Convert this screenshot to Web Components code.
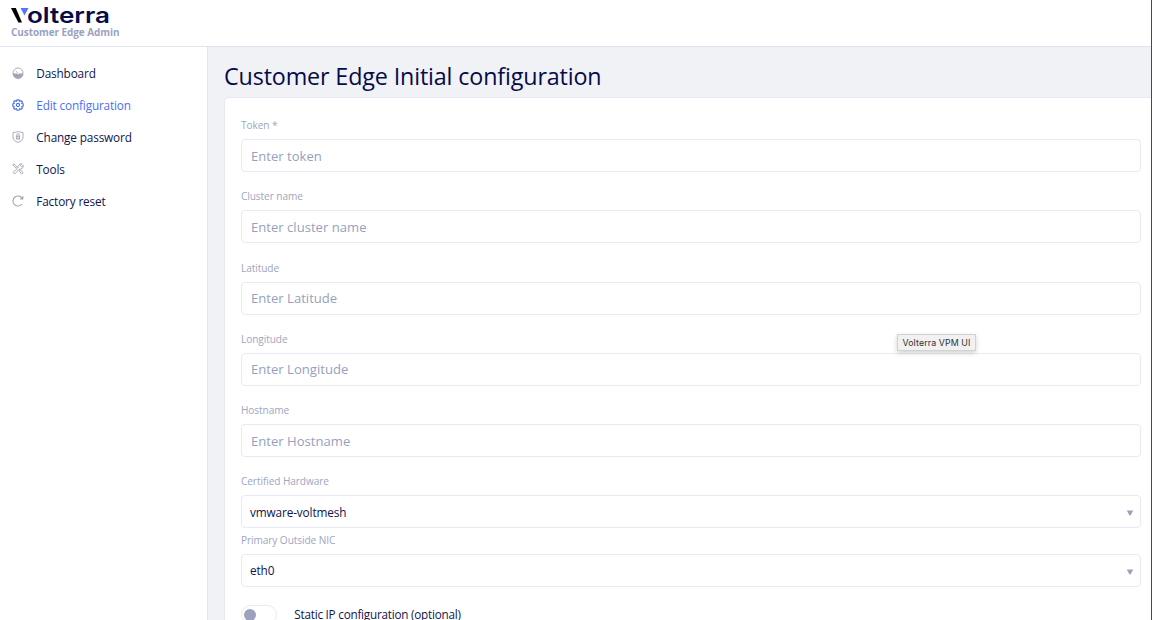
<!DOCTYPE html>
<html lang="en"><head><meta charset="utf-8"><title>Volterra VPM UI</title>
<style>html,body{margin:0;height:100%;overflow:hidden;background:#fff}body{font-family:"Open Sans","Noto Sans",sans-serif;color:#0f1247}</style></head><body>
<vp-app>
<vp-brand slot="header">Customer Edge Admin</vp-brand>
<vp-nav-item slot="nav" icon="dash">Dashboard</vp-nav-item>
<vp-nav-item slot="nav" icon="gear" active>Edit configuration</vp-nav-item>
<vp-nav-item slot="nav" icon="shield">Change password</vp-nav-item>
<vp-nav-item slot="nav" icon="tools">Tools</vp-nav-item>
<vp-nav-item slot="nav" icon="reset">Factory reset</vp-nav-item>
<span slot="title">Customer Edge Initial configuration</span>
<vp-field label="Token *">Enter token</vp-field>
<vp-field label="Cluster name">Enter cluster name</vp-field>
<vp-field label="Latitude">Enter Latitude</vp-field>
<vp-field label="Longitude">Enter Longitude</vp-field>
<vp-field label="Hostname">Enter Hostname</vp-field>
<vp-field label="Certified Hardware" select>vmware-voltmesh</vp-field>
<vp-field label="Primary Outside NIC" select>eth0</vp-field>
<vp-toggle>Static IP configuration (optional)</vp-toggle>
<vp-tip slot="tip">Volterra VPM UI</vp-tip>
</vp-app>
<script>
const define=(name,html,setup)=>customElements.define(name,class extends HTMLElement{
  constructor(){super();this.attachShadow({mode:'open'}).innerHTML=html}
  connectedCallback(){if(setup)setup(this,this.shadowRoot)}
});
define('vp-app',`<style>
:host{display:grid;grid-template:46.5px 1fr/208px 1fr;height:620px;width:1151px;border-right:1px solid #41486a;overflow:hidden;position:relative}
header{grid-column:1/3;border-bottom:1px solid #dfe3ee;box-sizing:border-box}
nav{border-right:1px solid #dfe3ee;box-sizing:border-box;padding-top:10.5px}
main{background:#f0f2f6;padding-left:16px;min-width:0;overflow:hidden}
h1{margin:0;height:50.5px;line-height:58px;font-size:23.3px;letter-spacing:-.14px;font-weight:400;color:#070b48;white-space:nowrap}
section{background:#fff;border:1px solid #e9e9f6;border-right:0;border-radius:5px 0 0 0;padding:17px 10px 0 16px;height:600px}
</style><header><slot name="header"></slot></header><nav><slot name="nav"></slot></nav><main><h1><slot name="title"></slot></h1><section><slot></slot></section></main><slot name="tip"></slot>`);
define('vp-brand',`<style>:host{display:block;padding:5px 0 0 11px}svg{display:block;overflow:visible}div{font-size:9.95px;letter-spacing:-.05px;font-weight:700;line-height:14px;color:#9ba2c0;white-space:nowrap}</style>
<svg width="110" height="20" viewBox="0 0 110 20"><path d="M0 3H4.8L11 17.5H7.3Z" fill="#000"/><path d="M9.5 3H17.5L13.5 10.6Z" fill="#5276f8"/><text x="16" y="18" textLength="83" lengthAdjust="spacingAndGlyphs" font-family="Inter" font-weight="600" font-size="22" fill="#070b48">olterra</text></svg><div><slot></slot></div>`);
const icons={
dash:'<circle cx="6" cy="6" r="5"/><path d="M1 6.8H4.5L6 7.6L7.5 6.8H11A5 5 0 0 1 1 6.8Z" fill="currentColor" stroke-width=".5"/><path d="M3.8 3.8L6 6.5" stroke-width=".8"/>',
gear:'<path d="M5 .8H7L7.5 2.2L9 1.6L10.4 3L9.8 4.5L11.2 5V7L9.8 7.5L10.4 9L9 10.4L7.5 9.8L7 11.2H5L4.5 9.8L3 10.4L1.6 9L2.2 7.5L.8 7V5L2.2 4.5L1.6 3L3 1.6L4.5 2.2Z" stroke-width="1.15"/><circle cx="6" cy="6" r="1.6" stroke-width="1.1"/>',
shield:'<path d="M6 .7L11 1.6V6C11 8.8 8.8 10.7 6 11.4C3.2 10.7 1 8.8 1 6V1.6Z"/><rect x="4.4" y="5.2" width="3.2" height="2.8" fill="currentColor" fill-opacity=".35"/><path d="M4.8 5V4A1.2 1.2 0 0 1 7.2 4V5"/>',
tools:'<path d="M1 1L2.8 1.4L5.2 4.3L4.4 5.2L1.5 2.8ZM6.8 7.3L8 6.6L11.2 9.6L9.7 11.2ZM1 9.4L5.8 5L6.2 3.1L8 1L9.8 .8L8.4 2.5L9.4 3.7L11.3 2.3L11 4.5L9 6.1L7 6.4L2.6 11.1Z" stroke-width=".9"/>',
reset:'<path d="M10 9A5 5 0 1 1 10.4 3.6M10.8 1.2V4H8" stroke-width="1.1"/>'};
define('vp-nav-item',`<style>:host{display:flex;align-items:center;height:32px;padding-left:11.6px;font-size:11.8px;letter-spacing:-.16px;line-height:30px;white-space:nowrap;color:#12154d}:host([active]){color:#4b70f5}svg{width:12px;height:12px;margin:0 12.7px 0 0;color:#a3a6b2;fill:none;stroke:currentColor;stroke-width:.9;overflow:visible}:host([active]) svg{color:#4b70f5}</style><svg viewBox="0 0 12 12"></svg><slot></slot>`,(h,r)=>{r.querySelector('svg').innerHTML=icons[h.getAttribute('icon')]});
define('vp-field',`<style>:host{display:block;height:71.3px}:host([select]){height:58.3px}label{display:block;height:24px;line-height:20px;font-size:10.1px;letter-spacing:-.08px;color:#a0a5c2;white-space:nowrap}.box{height:33px;box-sizing:border-box;border:1px solid #e9e9f6;border-radius:4px;padding:0 6px 0 9px;display:flex;align-items:center;justify-content:space-between;font-size:13.1px;line-height:32px;color:#989fbd;background:#fff}:host([select]) .box{font-size:11.8px;letter-spacing:-.13px;padding-left:8px;color:#10134a}svg{display:none;margin-top:3px}:host([select]) svg{display:block}</style><label></label><div class="box"><span><slot></slot></span><svg width="8" height="6" viewBox="0 0 8 6"><path d="M.7.5H7.3L4.5 5.5H3.5Z" fill="#9ca2bd"/></svg></div>`,(h,r)=>{r.querySelector('label').textContent=h.getAttribute('label')});
define('vp-toggle',`<style>:host{display:flex;align-items:center;height:19px;margin-top:17px;font-size:11.7px;letter-spacing:-.22px;line-height:19px;white-space:nowrap;color:#12154d}i{display:flex;align-items:center;box-sizing:border-box;width:36px;height:19px;border:1px solid #e9e9f6;border-radius:10px;padding-left:2px;margin-right:17.3px}i::before{content:"";width:12px;height:12px;border-radius:50%;background:#9ca1be}</style><i></i><slot></slot>`);
define('vp-tip',`<style>:host{position:absolute;left:897px;top:334px;width:79px;height:17px;box-sizing:border-box;background:#f1f1f1;border:1px solid #d2d2d2;box-shadow:0 2px 5px rgba(0,0,0,.18);font:8.8px/16px Inter,sans-serif;letter-spacing:.12px;text-align:center;color:#303030;white-space:nowrap}</style><slot></slot>`);
</script></body></html>
